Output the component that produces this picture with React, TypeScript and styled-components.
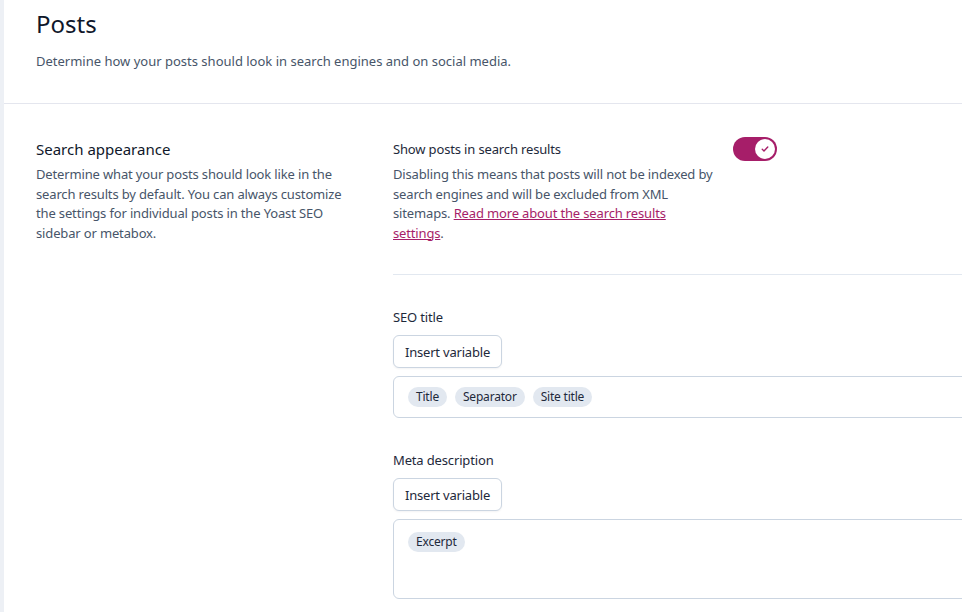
import React from "react";
import styled, { createGlobalStyle } from "styled-components";

const GlobalStyle = createGlobalStyle`
  html, body {
    margin: 0;
    padding: 0;
    background: #edf0f5;
    overflow: hidden;
  }
  body {
    font-family: "Noto Sans", Roboto, Arial, sans-serif;
    -webkit-font-smoothing: antialiased;
  }
`;

const Shell = styled.div`
  padding-left: 4px;
  min-height: 612px;
  width: 1100px;
`;

const Panel = styled.main`
  background: #ffffff;
  min-height: 612px;
`;

const Header = styled.header`
  padding: 8px 32px 32px;
  border-bottom: 1px solid #e4e6ee;
`;

const PageTitle = styled.h1`
  margin: 0;
  font-size: 24px;
  line-height: 32px;
  font-weight: 400;
  color: #0f172a;
`;

const PageLead = styled.p`
  margin: 11px 0 0;
  font-size: 13px;
  line-height: 20px;
  color: #475569;
`;

const Section = styled.section`
  display: grid;
  grid-template-columns: 320px 640px;
  column-gap: 37px;
  padding: 33px 32px 0;
`;

const Intro = styled.div``;

const SectionTitle = styled.h2`
  margin: 0;
  font-size: 15px;
  line-height: 24px;
  font-weight: 400;
  color: #0f172a;
`;

const Text = styled.p`
  margin: 4px 0 0;
  font-size: 13px;
  line-height: 19.5px;
  letter-spacing: -0.15px;
  color: #475569;
`;

const Fields = styled.div`
  display: flex;
  flex-direction: column;
`;

const ToggleRow = styled.div`
  display: flex;
  align-items: flex-start;
  gap: 20px;
  padding-bottom: 31px;
  border-bottom: 1px solid #e2e8f0;
`;

const ToggleText = styled.div`
  width: 320px;
`;

const ToggleLabel = styled.div`
  font-size: 13px;
  line-height: 24px;
  letter-spacing: -0.15px;
  color: #1e293b;
`;

const Link = styled.a`
  color: #a61e69;
  text-decoration: underline;
`;

const Switch = styled.button<{ $on: boolean }>`
  display: flex;
  align-items: center;
  justify-content: ${(p) => (p.$on ? "flex-end" : "flex-start")};
  width: 44px;
  height: 24px;
  padding: 2px;
  border: none;
  border-radius: 12px;
  background: ${(p) => (p.$on ? "#a61e69" : "#e2e8f0")};
  cursor: pointer;
`;

const Knob = styled.span`
  display: flex;
  align-items: center;
  justify-content: center;
  width: 20px;
  height: 20px;
  border-radius: 50%;
  background: #ffffff;
`;

const Field = styled.div`
  margin-top: 32px;
  display: flex;
  flex-direction: column;
  align-items: flex-start;
  gap: 8px;
`;

const FieldLabel = styled.label`
  font-size: 13px;
  line-height: 20px;
  letter-spacing: -0.15px;
  color: #1e293b;
`;

const Button = styled.button`
  height: 33px;
  padding: 0 11px;
  border: 1px solid #cbd5e1;
  border-radius: 6px;
  background: #ffffff;
  font-family: inherit;
  font-size: 13px;
  letter-spacing: -0.2px;
  color: #1e293b;
  box-shadow: 0 1px 2px rgba(15, 23, 42, 0.05);
`;

const Editor = styled.div<{ $tall?: boolean }>`
  box-sizing: border-box;
  width: 100%;
  min-height: ${(p) => (p.$tall ? "80px" : "42px")};
  display: flex;
  align-items: flex-start;
  flex-wrap: wrap;
  gap: 8px;
  padding: ${(p) => (p.$tall ? "12px 14px" : "10px 14px")};
  border: 1px solid #cbd5e1;
  border-radius: 6px;
  background: #ffffff;
`;

const Pill = styled.span`
  height: 20px;
  padding: 0 8px;
  border-radius: 10px;
  background: #e2e8f0;
  font-size: 12px;
  line-height: 20px;
  letter-spacing: -0.2px;
  color: #1e293b;
`;

function Check() {
  return (
    <svg width="10" height="10" viewBox="0 0 20 20" fill="none">
      <path
        d="M4.5 10.5l3.5 3.5 7.5-8"
        stroke="#a61e69"
        strokeWidth="2.8"
        strokeLinecap="round"
        strokeLinejoin="round"
      />
    </svg>
  );
}

function VariableField({
  label,
  pills,
  tall
}: {
  label: string;
  pills: string[];
  tall?: boolean;
}) {
  return (
    <Field>
      <FieldLabel>{label}</FieldLabel>
      <Button type="button">Insert variable</Button>
      <Editor $tall={tall}>
        {pills.map((p) => (
          <Pill key={p}>{p}</Pill>
        ))}
      </Editor>
    </Field>
  );
}

export default function App() {
  return (
    <Shell>
      <GlobalStyle />
      <Panel>
        <Header>
          <PageTitle>Posts</PageTitle>
          <PageLead>
            Determine how your posts should look in search engines and on
            social media.
          </PageLead>
        </Header>
        <Section>
          <Intro>
            <SectionTitle>Search appearance</SectionTitle>
            <Text>
              Determine what your posts should look like in the search results
              by default. You can always customize the settings for individual
              posts in the Yoast SEO sidebar or metabox.
            </Text>
          </Intro>
          <Fields>
            <ToggleRow>
              <ToggleText>
                <ToggleLabel>Show posts in search results</ToggleLabel>
                <Text>
                  Disabling this means that posts will not be indexed by search
                  engines and will be excluded from XML sitemaps.{" "}
                  <Link href="#">Read more about the search results settings</Link>
                  .
                </Text>
              </ToggleText>
              <Switch $on type="button" aria-checked="true" role="switch">
                <Knob>
                  <Check />
                </Knob>
              </Switch>
            </ToggleRow>
            <VariableField
              label="SEO title"
              pills={["Title", "Separator", "Site title"]}
            />
            <VariableField label="Meta description" pills={["Excerpt"]} tall />
          </Fields>
        </Section>
      </Panel>
    </Shell>
  );
}
